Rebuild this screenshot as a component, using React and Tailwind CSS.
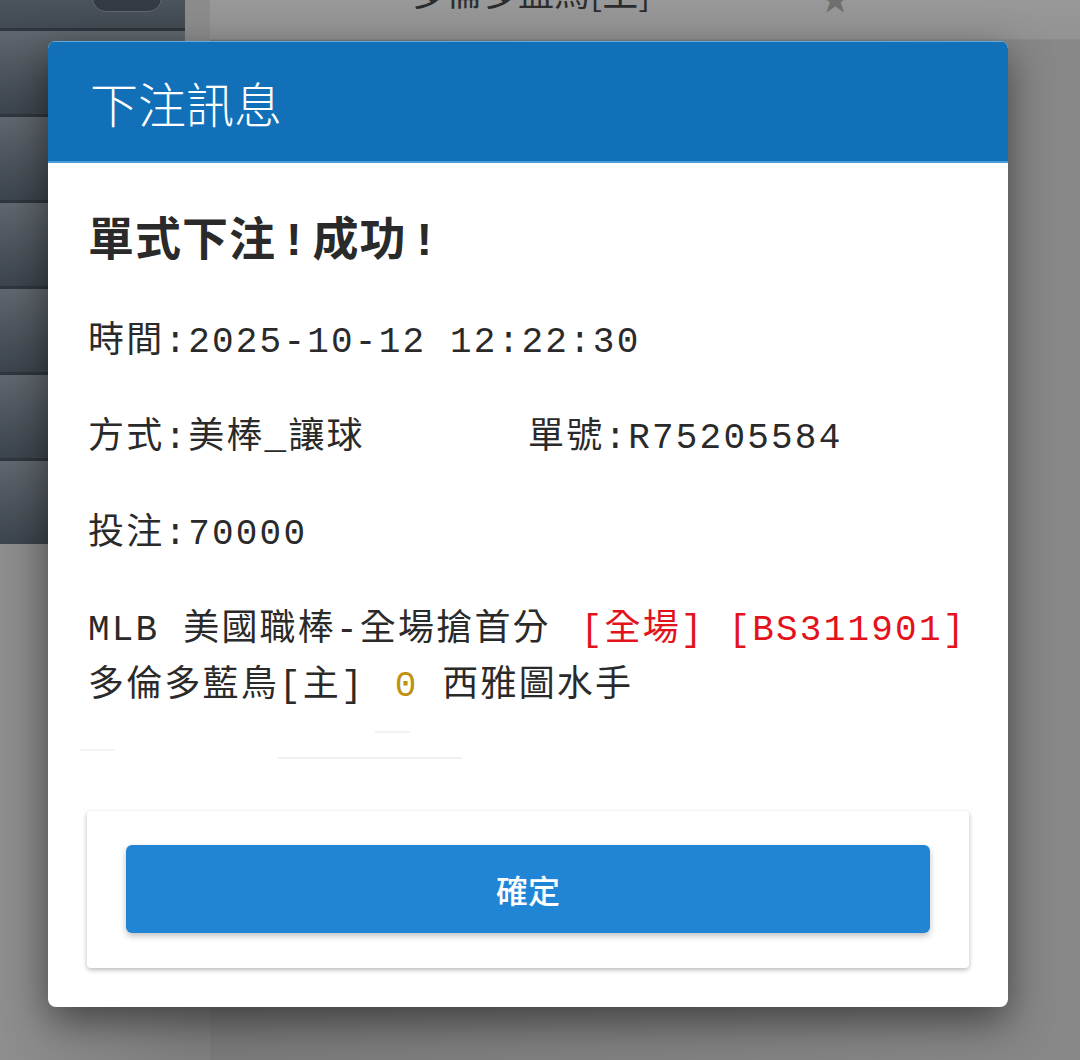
import React from "react";

const MONO = { fontFamily: "'Liberation Mono', 'Noto Sans CJK TC', monospace" };
const SANS = { fontFamily: "'Noto Sans CJK TC', 'Noto Sans', sans-serif" };

function SideRow({ first }) {
  return (
    <div
      className={
        first
          ? "h-[28px] bg-gradient-to-b from-[#4b535b] to-[#424a52] overflow-hidden"
          : "h-[86px] border-t-[3px] border-[#2f363d] bg-gradient-to-b from-[#60676e] to-[#3c444c]"
      }
    >
      {first && (
        <div className="ml-[92px] -mt-[22px] h-[34px] w-[70px] rounded-[14px] bg-[#343b43] border border-[#60676e]" />
      )}
    </div>
  );
}

export default function App() {
  return (
    <div className="relative w-[1080px] h-[1060px] overflow-hidden bg-[#898989]" style={SANS}>
      {/* background page (dimmed) */}
      <div className="flex h-full">
        <aside className="w-[185px] flex flex-col">
          <SideRow first />
          <SideRow />
          <SideRow />
          <SideRow />
          <SideRow />
          <SideRow />
          <SideRow />
          <div className="flex-1 bg-gradient-to-r from-[#8e8e8e] to-[#808080]" />
        </aside>
        <div className="w-[25px] flex flex-col">
          <div className="h-[545px] bg-[#8c8c8c]" />
          <div className="flex-1 bg-[#7f7f7f]" />
        </div>
        <main className="flex-1 flex flex-col">
          <div className="h-[40px] bg-gradient-to-b from-[#989898] to-[#939393] overflow-hidden flex items-start border-b border-[#8f8a88]">
            <div className="ml-[200px] -mt-[28px] text-[36px] leading-[36px] text-[#2c2c2c] whitespace-nowrap">多倫多藍鳥[主]</div>
            <div className="ml-[170px] -mt-[18px] text-[30px] leading-[30px] text-[#6f6f6f]">★</div>
          </div>
          <div className="flex-1 bg-gradient-to-r from-[#7a7a7a] to-[#888888]" />
        </main>
      </div>

      {/* modal */}
      <div className="absolute left-[48px] top-[41px] w-[960px] h-[966px] rounded-[8px] bg-white overflow-hidden flex flex-col shadow-[0_14px_40px_rgba(0,0,0,0.5)]">
        <div className="h-[122px] shrink-0 bg-[#1270b9] border-t border-[#62aae2] border-b-2 border-b-[#4d9bd8] flex items-center pl-[42px]">
          <span className="text-[48px] font-light text-white leading-none">下注訊息</span>
        </div>

        <div className="flex flex-col px-[40px] pt-[49px] text-[#2a2a2a]" style={MONO}>
          <div className="h-[62px] leading-[62px] text-[46px] font-bold tracking-[1px] whitespace-nowrap">
            單式下注<span className="px-[4px]">!</span>成功<span className="px-[4px]">!</span>
          </div>
          <div className="mt-[41px] h-[56px] leading-[56px] text-[36px] tracking-[2.2px] whitespace-nowrap">時間:2025-10-12 12:22:30</div>
          <div className="mt-[40px] h-[56px] leading-[56px] text-[36px] tracking-[2.2px] flex whitespace-nowrap">
            <span className="w-1/2">方式:美棒_讓球</span>
            <span className="w-1/2">單號:R75205584</span>
          </div>
          <div className="mt-[40px] h-[56px] leading-[56px] text-[36px] tracking-[2.2px] whitespace-nowrap">投注:70000</div>
          <div className="mt-[40px] leading-[56px] text-[36px] tracking-[2.2px] whitespace-nowrap">
            <div>
              MLB 美國職棒-全場搶首分 <span className="text-[#e3121b] ml-[6px]">[全場]</span>{" "}
              <span className="text-[#e3121b]">[BS311901]</span>
            </div>
            <div>
              多倫多藍鳥[主] <span className="text-[#c0920f] ml-[6px]">0</span> 西雅圖水手
            </div>
          </div>
          <div className="h-[56px] flex flex-col">
            <div className="mt-[16px] ml-[287px] h-[2px] w-[35px] bg-[#f2f2f2]" />
            <div className="mt-[16px] -ml-[8px] h-[2px] w-[35px] bg-[#f3f3f3]" />
            <div className="mt-[6px] ml-[190px] h-[2px] w-[184px] bg-[#f0f0f0]" />
          </div>
        </div>

        <div className="mt-auto px-[39px] pb-[39px]">
          <div className="h-[157px] rounded-[4px] bg-white px-[39px] pt-[34px] shadow-[0_2px_5px_rgba(0,0,0,0.28)]">
            <button className="w-full h-[88px] rounded-[6px] bg-[#2185d6] text-white text-[32px] font-medium shadow-[0_3px_6px_rgba(0,0,0,0.25)]">
              確定
            </button>
          </div>
        </div>
      </div>
    </div>
  );
}
